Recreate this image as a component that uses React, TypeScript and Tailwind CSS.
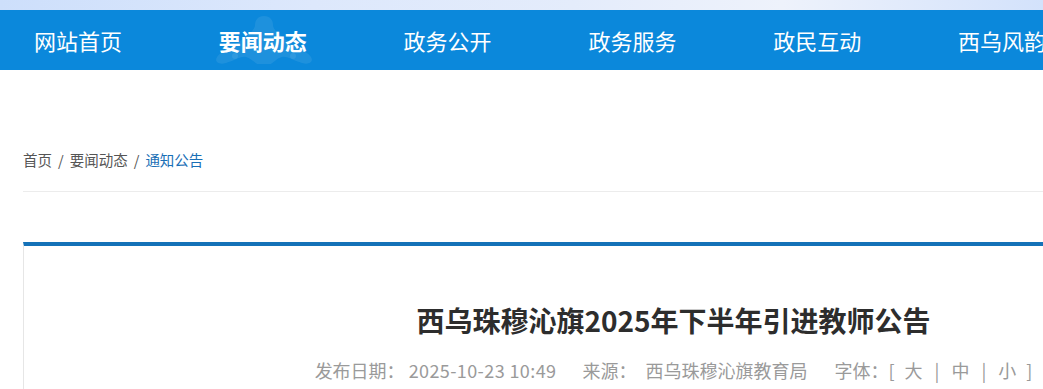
const navItems = ["网站首页", "要闻动态", "政务公开", "政务服务", "政民互动", "西乌风韵"];

function Watermark() {
   return (
      <svg
         className="pointer-events-none absolute left-[-8px] top-[-11px]"
         width="106"
         height="50"
         viewBox="0 0 106 50"
         fill="none"
      >
         <path
            d="M53 2c6 0 9 4 9 9 0 5 6 9 12 14 10 7 22 12 26 18 3 5-2 8-9 6-8-2-14-7-20-6-6 1-10 9-18 9s-12-8-18-9c-6-1-12 4-20 6-7 2-12-1-9-6 4-6 16-11 26-18 6-5 12-9 12-14 0-5 3-9 9-9z"
            fill="rgba(255,255,255,0.08)"
         />
         <circle cx="24" cy="42" r="3" fill="rgba(255,255,255,0.08)" />
         <circle cx="82" cy="42" r="3" fill="rgba(255,255,255,0.08)" />
      </svg>
   );
}

export default function App() {
   return (
      <div className="w-full h-[389px] overflow-hidden bg-white font-['Noto_Sans_CJK_SC','Noto_Sans',sans-serif]">
         <div className="h-[10px] bg-[linear-gradient(90deg,#cddffb_0%,#dde8fc_30%,#e4ecfb_55%,#eef2fb_75%,#d3e2fb_100%)]" />
         <nav className="flex h-[60px] items-center bg-[#0b88db] pl-[34px]">
            {navItems.map((item, i) => (
               <div key={item} className="relative w-[184.8px] shrink-0">
                  {i === 1 && <Watermark />}
                  <span
                     className={`relative whitespace-nowrap text-[22px] leading-[30px] text-white ${
                        i === 1 ? "font-bold" : "font-normal"
                     }`}
                  >
                     {item}
                  </span>
               </div>
            ))}
         </nav>

         <div className="ml-[23px] w-[1300px]">
            <div className="border-b border-[#ececec] pb-[21px] pt-[80px] text-[14.5px] leading-[20px] text-[#555]">
               <span>首页</span>
               <span className="mx-[6px]">/</span>
               <span>要闻动态</span>
               <span className="mx-[6px]">/</span>
               <span className="text-[#1a6fb6]">通知公告</span>
            </div>

            <div className="mt-[50px] h-[200px] border-l border-t-4 border-l-[#e6e6e6] border-t-[#1472b8]">
               <h1 className="pt-[54px] text-center text-[28px] font-bold leading-[40px] text-[#2d2d2d]">
                  西乌珠穆沁旗2025年下半年引进教师公告
               </h1>
               <div className="mt-[18px] flex justify-center whitespace-nowrap text-[18px] leading-[24px] text-[#9a9a9a]">
                  <span>发布日期：</span>
                  <span className="ml-[4px] tracking-[0.4px]">2025-10-23 10:49</span>
                  <span className="ml-[26px]">来源：</span>
                  <span className="ml-[9px]">西乌珠穆沁旗教育局</span>
                  <span className="ml-[27px]">字体：[</span>
                  <span className="ml-[10px]">大</span>
                  <span className="mx-[12px]">|</span>
                  <span>中</span>
                  <span className="mx-[12px]">|</span>
                  <span>小</span>
                  <span className="ml-[10px]">]</span>
               </div>
            </div>
         </div>
      </div>
   );
}
